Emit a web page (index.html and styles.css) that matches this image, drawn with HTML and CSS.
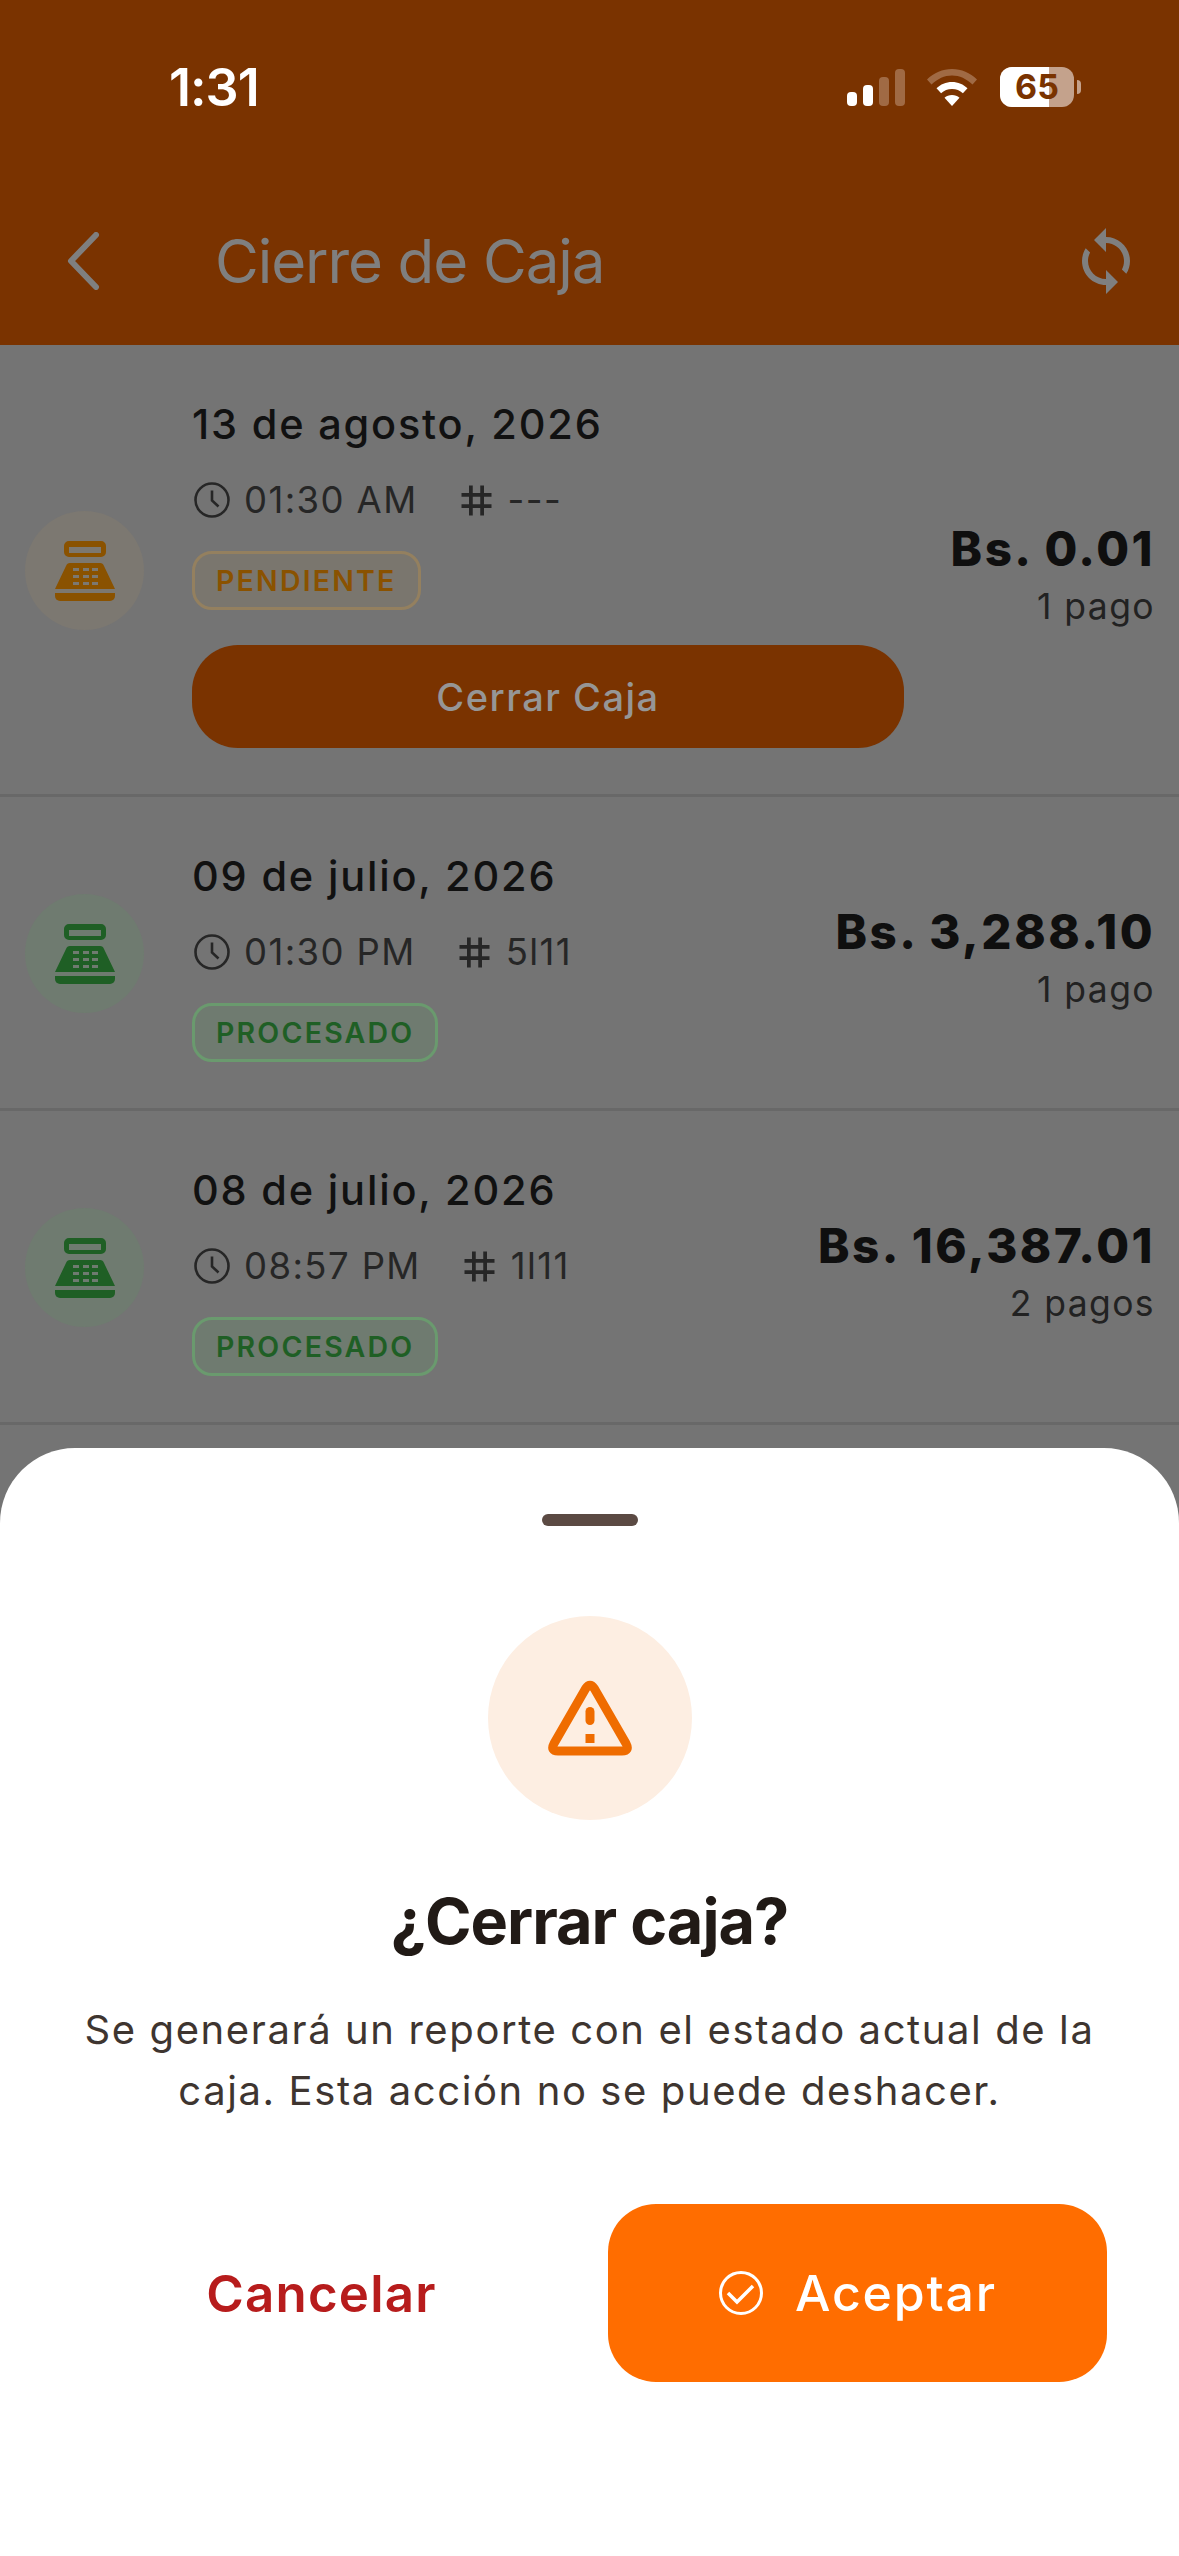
FILE: index.html
```html
<!DOCTYPE html>
<html lang="es">
<head>
<meta charset="utf-8">
<title>Cierre de Caja</title>
<link rel="stylesheet" href="styles.css">
</head>
<body>
<div class="screen">
  <header class="header">
    <div class="status">
      <span class="clock-time">1:31</span>
      <div class="status-icons">
        <div class="signal"><i class="on b1"></i><i class="on b2"></i><i class="b3"></i><i class="b4"></i></div>
        <svg class="wifi" viewBox="0 0 50 37" width="50" height="37"><path class="wifi-dim" d="M25 0C15.500 0 7 3.800 0 10.500l4.500 5C10.500 9.800 17.500 6.500 25 6.500s14.500 3.300 20.500 9l4.500-5C43 3.800 34.500 0 25 0z"/><path d="M25 13c-6 0-11.500 2.400-15.500 6.300l4.600 5C17 21.500 20.800 20 25 20s8 1.500 10.900 4.300l4.600-5C36.500 15.400 31 13 25 13z"/><path d="M25 26c-2.900 0-5.500 1-7.500 2.800L25 37l7.500-8.200C30.500 27 27.900 26 25 26z"/></svg>
        <div class="battery"><div class="battery-body"><div class="battery-fill"></div><span class="battery-num">65</span></div><div class="battery-tip"></div></div>
      </div>
    </div>
    <div class="appbar">
      <svg class="back" viewBox="0 0 34 58" width="34" height="58"><path d="M30 3 5 29l25 26" fill="none" stroke="currentColor" stroke-width="6" stroke-linecap="round" stroke-linejoin="round"/></svg>
      <h1 class="title">Cierre de Caja</h1>
      <svg class="sync" viewBox="0 0 24 24" width="72" height="72"><path fill="currentColor" d="M12 4V1L8 5l4 4V6c3.310 0 6 2.690 6 6 0 1.010-.25 1.970-.7 2.800l1.460 1.460C19.540 15.030 20 13.570 20 12c0-4.420-3.580-8-8-8zm0 14c-3.310 0-6-2.690-6-6 0-1.010.25-1.970.7-2.800L5.240 7.740C4.460 8.970 4 10.430 4 12c0 4.420 3.580 8 8 8v3l4-4-4-4v3z"/></svg>
    </div>
  </header>

  <main class="list">
    <article class="row">
      <div class="avatar avatar-pending">
        <svg class="register" viewBox="0 0 60 60" width="60" height="60"><use href="#reg"/></svg>
      </div>
      <div class="info">
        <div class="date">13 de agosto, 2026</div>
        <div class="meta">
          <svg class="ic-clock" viewBox="0 0 36 36" width="36" height="36"><use href="#clk"/></svg>
          <span class="time">01:30 AM</span>
          <svg class="ic-tag" viewBox="0 0 24 24" width="45" height="45"><use href="#tag"/></svg>
          <span class="code">---</span>
        </div>
        <span class="badge badge-pending">PENDIENTE</span>
        <button class="close-btn">Cerrar Caja</button>
      </div>
      <div class="sum">
        <div class="amount">Bs. 0.01</div>
        <div class="count">1 pago</div>
      </div>
    </article>

    <article class="row">
      <div class="avatar avatar-done">
        <svg class="register" viewBox="0 0 60 60" width="60" height="60"><use href="#reg"/></svg>
      </div>
      <div class="info">
        <div class="date">09 de julio, 2026</div>
        <div class="meta">
          <svg class="ic-clock" viewBox="0 0 36 36" width="36" height="36"><use href="#clk"/></svg>
          <span class="time">01:30 PM</span>
          <svg class="ic-tag" viewBox="0 0 24 24" width="45" height="45"><use href="#tag"/></svg>
          <span class="code">5l11</span>
        </div>
        <span class="badge badge-done">PROCESADO</span>
      </div>
      <div class="sum">
        <div class="amount">Bs. 3,288.10</div>
        <div class="count">1 pago</div>
      </div>
    </article>

    <article class="row">
      <div class="avatar avatar-done">
        <svg class="register" viewBox="0 0 60 60" width="60" height="60"><use href="#reg"/></svg>
      </div>
      <div class="info">
        <div class="date">08 de julio, 2026</div>
        <div class="meta">
          <svg class="ic-clock" viewBox="0 0 36 36" width="36" height="36"><use href="#clk"/></svg>
          <span class="time">08:57 PM</span>
          <svg class="ic-tag" viewBox="0 0 24 24" width="45" height="45"><use href="#tag"/></svg>
          <span class="code">1l11</span>
        </div>
        <span class="badge badge-done">PROCESADO</span>
      </div>
      <div class="sum">
        <div class="amount">Bs. 16,387.01</div>
        <div class="count">2 pagos</div>
      </div>
    </article>
  </main>

  <section class="sheet">
    <div class="handle"></div>
    <div class="warn">
      <svg viewBox="0 0 86 76" width="86" height="76"><path d="M38.700 8.500Q43 2 47.300 8.500L79 63.500Q83 71 75 71H11Q3 71 7 63.500Z" fill="none" stroke="currentColor" stroke-width="9" stroke-linejoin="round"/><rect x="38.500" y="27" width="9" height="18" rx="4.500" fill="currentColor"/><rect x="38.500" y="54" width="9" height="9" fill="currentColor"/></svg>
    </div>
    <h2 class="sheet-title">¿Cerrar caja?</h2>
    <p class="sheet-text">Se generará un reporte con el estado actual de la caja. Esta acción no se puede deshacer.</p>
    <div class="actions">
      <button class="cancel">Cancelar</button>
      <button class="accept">
        <svg viewBox="0 0 46 46" width="46" height="46"><circle cx="23" cy="23" r="20.500" fill="none" stroke="currentColor" stroke-width="3"/><path d="M10 23l9 9 16-16" fill="none" stroke="currentColor" stroke-width="3.500"/></svg>
        <span>Aceptar</span>
      </button>
    </div>
  </section>

  <svg class="defs" width="0" height="0" aria-hidden="true">
    <defs>
      <g id="reg">
        <path fill="currentColor" fill-rule="evenodd" d="M14 0h32a5 5 0 0 1 5 5v6a5 5 0 0 1-5 5H14a5 5 0 0 1-5-5V5a5 5 0 0 1 5-5zm0 6v6h32V6z"/>
        <path fill="currentColor" fill-rule="evenodd" d="M15 22h30q3 0 4 3l11 23H0l11-23q1-3 4-3zM18 27v3h6v-3zm10 0v3h6v-3zm9 0v3h6v-3zM18 34v3h6v-3zm10 0v3h6v-3zm9 0v3h6v-3zM18 41v3h6v-3zm10 0v3h6v-3zm9 0v3h6v-3z"/>
        <path fill="currentColor" d="M0 52h60v3a5 5 0 0 1-5 5H5a5 5 0 0 1-5-5z"/>
      </g>
      <g id="clk">
        <circle cx="18" cy="18" r="16.500" fill="none" stroke="currentColor" stroke-width="2.600"/>
        <path d="M18 8.500V18.500l6.500 6" fill="none" stroke="currentColor" stroke-width="2.600"/>
      </g>
      <path id="tag" fill="currentColor" d="M20 10V8h-4V4h-2v4h-4V4H8v4H4v2h4v4H4v2h4v4h2v-4h4v4h2v-4h4v-2h-4v-4h4zm-6 4h-4v-4h4v4z"/>
    </defs>
  </svg>
</div>
</body>
</html>
```

FILE: styles.css
```css
* { box-sizing: border-box; }
html, body { margin: 0; padding: 0; }
body { font-family: Inter, "Noto Sans", sans-serif; }

.screen {
  position: relative;
  width: 1179px;
  height: 2556px;
  overflow: hidden;
  background: #747474;
}

/* header */
.header {
  height: 345px;
  background: #7a3300;
  display: flex;
  flex-direction: column;
}
.status {
  height: 176px;
  padding: 58px 98px 0 169px;
  display: flex;
  justify-content: space-between;
  align-items: flex-start;
  color: #fff;
}
.clock-time {
  font-size: 52px;
  line-height: 60px;
  font-weight: 600;
  letter-spacing: -1px;
}
.status-icons {
  display: flex;
  align-items: flex-start;
  margin-top: 9px;
}
.signal {
  display: flex;
  align-items: flex-end;
  gap: 6px;
  height: 37px;
  margin-top: 2px;
}
.signal i {
  display: block;
  width: 10px;
  border-radius: 4px;
  background: #a06a44;
}
.signal .on { background: #fff; }
.b1 { height: 14px; }
.b2 { height: 21px; }
.b3 { height: 29px; }
.b4 { height: 37px; }
.wifi { fill: #fff; margin: 2px 0 0 22px; }
.wifi .wifi-dim { fill: #a06a44; }
.battery {
  display: flex;
  align-items: center;
  margin-left: 23px;
}
.battery-body {
  position: relative;
  width: 74px;
  height: 40px;
  border-radius: 12px;
  background: #c4a28c;
  overflow: hidden;
  display: flex;
  align-items: center;
  justify-content: center;
}
.battery-fill {
  position: absolute;
  left: 0;
  top: 0;
  bottom: 0;
  width: 49px;
  background: #fff;
}
.battery-num {
  position: relative;
  color: #7a3300;
  font-size: 34px;
  font-weight: 700;
  line-height: 40px;
}
.battery-tip {
  width: 4px;
  height: 14px;
  margin-left: 3px;
  border-radius: 0 7px 7px 0;
  background: #c4a28c;
}
.appbar {
  display: flex;
  align-items: center;
  height: 169px;
  padding: 0 37px 0 66px;
  color: #7f7f7f;
}
.back { flex: none; }
.title {
  flex: 1;
  margin: 0 0 0 115px;
  font-size: 60px;
  font-weight: 400;
  letter-spacing: -1.1px;
  line-height: 72px;
}
.sync { flex: none; }

/* list */
.list { display: flex; flex-direction: column; }
.row {
  display: flex;
  align-items: center;
  padding: 55px 24px 46px 25px;
  border-bottom: 3px solid #686868;
}
.avatar {
  flex: none;
  width: 119px;
  height: 119px;
  margin: -7px 48px 0 0;
  border-radius: 50%;
  display: flex;
  align-items: center;
  justify-content: center;
}
.avatar-pending { background: #7c7871; color: #8a5200; }
.avatar-done { background: #6f7b70; color: #1f5f25; }
.info { flex: 1; min-width: 0; }
.date {
  font-size: 41.5px;
  line-height: 48px;
  font-weight: 500;
  letter-spacing: 1.8px;
  color: #111;
}
.meta {
  display: flex;
  align-items: center;
  height: 46px;
  margin-top: 29px;
  font-size: 36.5px;
  letter-spacing: 1.4px;
  color: #262626;
}
.ic-clock { margin: 0 14px 0 2px; color: #262626; }
.ic-tag { margin: 0 9px 0 36px; color: #262626; }
.badge {
  display: inline-block;
  height: 59px;
  margin-top: 28px;
  padding: 0 21px;
  border: 3px solid;
  border-radius: 20px;
  font-size: 28.5px;
  line-height: 53px;
  font-weight: 600;
  letter-spacing: 2.2px;
}
.badge-pending { color: #8a5200; border-color: #94805f; background: #7a766e; }
.badge-done { color: #1f5f25; border-color: #6a9a6e; background: #6f7b70; }
.close-btn {
  display: block;
  width: 712px;
  height: 103px;
  margin: 35px 0 0;
  border: 0;
  border-radius: 46px;
  background: #7a3300;
  color: #969696;
  font-family: inherit;
  font-size: 38px;
  font-weight: 500;
  letter-spacing: 1.5px;
}
.sum { flex: none; text-align: right; }
.amount {
  font-size: 47.5px;
  line-height: 56px;
  font-weight: 800;
  letter-spacing: 2.5px;
  color: #0f0f0f;
}
.count {
  margin-top: 9px;
  font-size: 35.5px;
  line-height: 42px;
  letter-spacing: 1.4px;
  color: #222;
}

/* bottom sheet */
.sheet {
  position: absolute;
  left: 0;
  right: 0;
  bottom: 0;
  height: 1108px;
  background: #fff;
  border-radius: 75px 75px 0 0;
  display: flex;
  flex-direction: column;
  align-items: center;
  padding-top: 66px;
}
.handle {
  width: 96px;
  height: 12px;
  border-radius: 6px;
  background: #5b4a43;
}
.warn {
  width: 204px;
  height: 204px;
  margin-top: 90px;
  border-radius: 50%;
  background: #fdeee2;
  color: #ef6c00;
  display: flex;
  align-items: center;
  justify-content: center;
}
.sheet-title {
  margin: 62px 0 0;
  font-size: 63px;
  line-height: 78px;
  font-weight: 700;
  letter-spacing: -1px;
  color: #211a16;
}
.sheet-text {
  margin: 39px 0 0;
  width: 1040px;
  text-align: center;
  font-size: 40px;
  line-height: 61px;
  letter-spacing: 1.6px;
  color: #3e3530;
}
.actions {
  align-self: stretch;
  display: flex;
  align-items: center;
  margin-top: 83px;
  padding: 0 72px;
}
.cancel {
  flex: 1;
  height: 178px;
  border: 0;
  background: none;
  padding: 0;
  margin-right: 37px;
  color: #b71c1c;
  font-family: inherit;
  font-size: 51px;
  font-weight: 600;
  letter-spacing: 1.2px;
}
.accept {
  flex: none;
  width: 499px;
  height: 178px;
  border: 0;
  border-radius: 48px;
  background: #ff6d00;
  color: #fff;
  font-family: inherit;
  font-size: 50px;
  font-weight: 500;
  letter-spacing: 1.8px;
  display: flex;
  align-items: center;
  justify-content: center;
  gap: 31px;
}
.defs { position: absolute; }
```
